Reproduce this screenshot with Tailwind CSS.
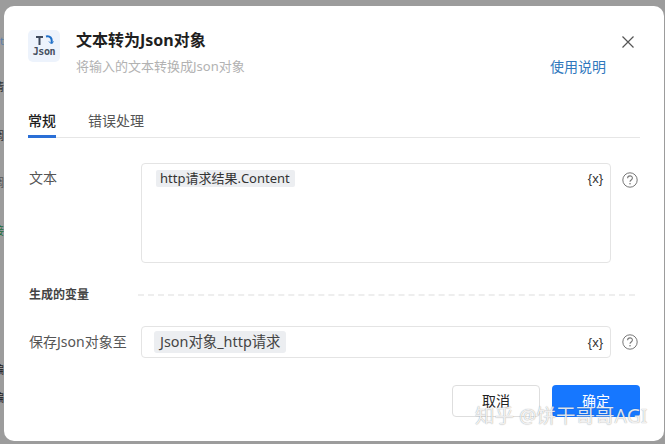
<!DOCTYPE html>
<html lang="zh-CN">
<head>
  <meta charset="UTF-8" />
  <title>文本转为Json对象</title>
  <script src="https://cdn.jsdelivr.net/npm/@tailwindcss/browser@4"></script>
</head>
<body class="relative w-[665px] h-[444px] overflow-hidden bg-[#9c9c9c] font-['Noto_Sans','Noto_Sans_CJK_SC',sans-serif]">
  <!-- bits of the page behind the dialog -->
  <span class="absolute left-0 top-[33px] text-[11px] leading-4 text-[#5a7ea8]">t</span>
  <span class="absolute left-[-7px] top-[79px] text-[11px] leading-4 text-[#333]">情</span>
  <span class="absolute left-[-7px] top-[128px] text-[11px] leading-4 text-[#333]">调</span>
  <span class="absolute left-[-7px] top-[175px] text-[11px] leading-4 text-[#555]">调</span>
  <span class="absolute left-[-7px] top-[223px] text-[11px] leading-4 text-[#1d6b3a]">接</span>
  <span class="absolute left-[-7px] top-[362px] text-[11px] leading-4 text-[#222]">编</span>
  <span class="absolute left-[-7px] top-[390px] text-[11px] leading-4 text-[#222]">编</span>

  <div class="absolute left-[4px] top-[6px] w-[660px] h-[435px] bg-white rounded-[10px] pl-[24px] pr-[24px] pt-[24px]">
    <!-- header -->
    <div class="flex h-[68px] relative">
      <div class="w-[32px] h-[32px] rounded-[5px] bg-[#edf3fc] flex flex-col items-center justify-center">
        <svg width="22" height="11" viewBox="0 0 22 11" fill="none">
          <path d="M3 2h7M6.500 2v8" stroke="#3f4a5c" stroke-width="2"/>
          <path d="M13 1.500c4 -1 6.500 1.500 5.500 6.500" stroke="#1e6fc8" stroke-width="2"/>
          <path d="M16 6.500l2.500 2.500l2 -2.500" stroke="#1e6fc8" stroke-width="1"/>
        </svg>
        <span class="text-[10px] leading-[12px] font-bold text-[#46505f] font-['DejaVu_Sans_Mono',monospace] tracking-[-0.4px]">Json</span>
      </div>
      <div class="ml-[16px]">
        <div class="text-[16px] leading-[20px] font-bold text-[#1f1f1f]">文本转为Json对象</div>
        <div class="mt-[6px] text-[13px] leading-[20px] text-[#b2b2b2]">将输入的文本转换成Json对象</div>
      </div>
      <a class="absolute left-[522px] top-[27px] text-[14px] leading-[20px] text-[#2f78bd]">使用说明</a>
      <svg class="absolute left-[594px] top-[6px]" width="12" height="12" viewBox="0 0 12 12" fill="none">
        <path d="M0.500 0.500l11 11M11.500 0.500l-11 11" stroke="#555" stroke-width="1.200"/>
      </svg>
    </div>

    <!-- tabs -->
    <div class="flex gap-[32px] h-[40px] border-b border-[#e6e6e6] w-[612px] text-[14px] leading-[20px] pt-[13px]">
      <div class="h-[27px] w-[28px] border-b-[3px] border-[#2a6fd6] font-medium text-[#1f1f1f] whitespace-nowrap">常规</div>
      <div class="text-[#555]">错误处理</div>
    </div>

    <!-- text field -->
    <div class="flex mt-[25px]">
      <label class="w-[113px] pl-px pt-[5px] text-[14px] leading-[20px] text-[#555]">文本</label>
      <div class="w-[470px] h-[100px] border border-[#e4e4e4] rounded-[4px] pl-[14px] pr-[7px] pt-[6px] flex justify-between items-start">
        <span class="h-[17px] w-[139px] px-[4px] bg-[#eceef1] rounded-[2px] text-[13px] leading-[17px] text-[#333] whitespace-nowrap">http请求结果.Content</span>
        <span class="text-[13px] leading-[17px] text-[#333] font-['Liberation_Sans',sans-serif]">{x}</span>
      </div>
      <div class="ml-[11px] pt-[9px]">
        <svg width="16" height="16" viewBox="0 0 16 16" fill="none">
          <circle cx="8" cy="8" r="7.200" stroke="#777" stroke-width="1"/>
          <path d="M5.600 6.300c0-3.200 4.800-3.200 4.800-.2c0 1.900-2.400 1.800-2.400 3.700" stroke="#777" stroke-width="1.100"/>
          <circle cx="8" cy="11.800" r=".8" fill="#777"/>
        </svg>
      </div>
    </div>

    <!-- section title -->
    <div class="flex items-center mt-[23px] h-[18px]">
      <span class="w-[110px] pl-px text-[12px] leading-[18px] font-bold text-[#444]">生成的变量</span>
      <div class="w-[497px] border-t-2 border-dashed border-[#eeeeee]"></div>
    </div>

    <!-- output field -->
    <div class="flex mt-[22px]">
      <label class="w-[113px] pl-px pt-[6px] text-[14px] leading-[20px] text-[#555] whitespace-nowrap">保存Json对象至</label>
      <div class="w-[470px] h-[32px] border border-[#e4e4e4] rounded-[4px] pl-[12px] pr-[7px] flex justify-between items-center">
        <span class="h-[22px] w-[132px] px-[6px] bg-[#eceef1] rounded-[3px] text-[14.400px] leading-[22px] text-[#444] whitespace-nowrap">Json对象_http请求</span>
        <span class="text-[13px] leading-[17px] text-[#333] font-['Liberation_Sans',sans-serif]">{x}</span>
      </div>
      <div class="ml-[11px] pt-[8px]">
        <svg width="16" height="16" viewBox="0 0 16 16" fill="none">
          <circle cx="8" cy="8" r="7.200" stroke="#777" stroke-width="1"/>
          <path d="M5.600 6.300c0-3.200 4.800-3.200 4.800-.2c0 1.900-2.400 1.800-2.400 3.700" stroke="#777" stroke-width="1.100"/>
          <circle cx="8" cy="11.800" r=".8" fill="#777"/>
        </svg>
      </div>
    </div>

    <!-- footer -->
    <div class="flex justify-end gap-[12px] mt-[27px]">
      <button class="w-[88px] h-[32px] pb-[2px] border border-[#dedede] rounded-[4px] bg-white text-[14px] text-[#222]">取消</button>
      <button class="w-[88px] h-[32px] pb-[2px] rounded-[4px] bg-[#1677ff] text-[14px] text-white">确定</button>
    </div>
  </div>

  <!-- zhihu watermark -->
  <div class="absolute left-[475px] top-[403px] text-[19.500px] leading-[26px] text-white/85 [text-shadow:0_0_1px_rgba(0,0,0,0.45)] whitespace-nowrap">知乎 @饼干哥哥AGI</div>
</body>
</html>
